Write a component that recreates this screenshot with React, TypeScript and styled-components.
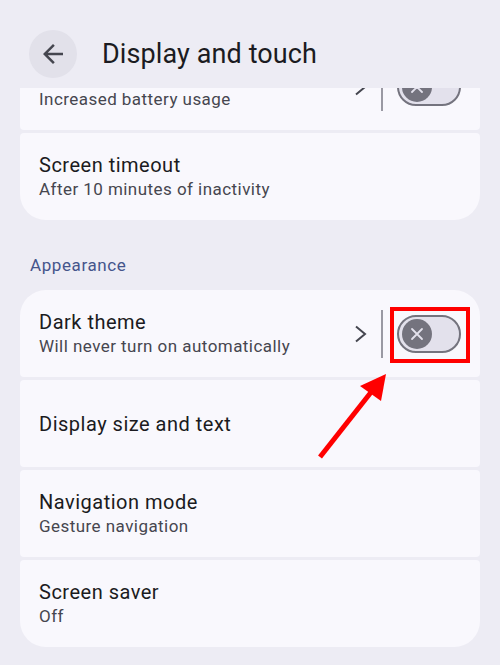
import React from "react";
import styled, { createGlobalStyle } from "styled-components";

const GlobalStyle = createGlobalStyle`
  html, body {
    margin: 0;
    padding: 0;
    background: #edecf4;
  }
  body {
    font-family: Roboto, "Noto Sans", sans-serif;
    -webkit-font-smoothing: antialiased;
  }
`;

const Page = styled.div`
  position: relative;
  width: 500px;
  height: 665px;
  overflow: hidden;
  background: #edecf4;
  display: flex;
  flex-direction: column;
`;

const Header = styled.header`
  flex: 0 0 88px;
  display: flex;
  align-items: center;
  gap: 25px;
  padding: 20px 0 0 29px;
  box-sizing: border-box;
`;

const BackButton = styled.button`
  width: 48px;
  height: 48px;
  border: none;
  border-radius: 50%;
  background: #e2e1ea;
  display: flex;
  align-items: center;
  justify-content: center;
  padding: 0;
  color: #45464f;
`;

const Title = styled.h1`
  margin: 0;
  font-size: 27px;
  font-weight: 400;
  color: #1b1b21;
  letter-spacing: 0.1px;
`;

const Scroller = styled.div`
  flex: 1;
  overflow: hidden;
`;

/* list is scrolled a little, so the first card slides under the header */
const ScrollContent = styled.div<{ $offset: number }>`
  margin-top: ${({ $offset }) => -$offset}px;
  padding: 0 20px;
`;

const Group = styled.div`
  display: flex;
  flex-direction: column;
  gap: 3px;
`;

const Card = styled.div`
  height: 87px;
  box-sizing: border-box;
  background: #f9f8fd;
  border-radius: 4px;
  padding: 0 19px 0 19px;
  display: flex;
  align-items: center;

  &:first-child {
    border-top-left-radius: 26px;
    border-top-right-radius: 26px;
  }
  &:last-child {
    border-bottom-left-radius: 26px;
    border-bottom-right-radius: 26px;
  }
`;

const Texts = styled.div`
  flex: 1;
  display: flex;
  flex-direction: column;
  min-width: 0;
`;

const RowTitle = styled.div`
  font-size: 20px;
  line-height: 24px;
  letter-spacing: 0.5px;
  color: #1b1b21;
`;

const RowSub = styled.div`
  font-size: 17px;
  line-height: 24px;
  letter-spacing: 0.45px;
  color: #46464f;
`;

const SectionLabel = styled.div`
  padding: 34px 0 13px 10px;
  font-size: 17px;
  line-height: 23px;
  letter-spacing: 0.6px;
  color: #45558b;
`;

const Trailing = styled.div`
  display: flex;
  align-items: center;
  height: 100%;
`;

const Chevron = styled.svg`
  width: 14px;
  height: 18px;
  margin-right: 13px;
  color: #45464f;
`;

const Divider = styled.div`
  width: 2px;
  height: 48px;
  background: #9a99a3;
  margin-right: 14px;
`;

const Track = styled.div`
  width: 64px;
  height: 38px;
  box-sizing: border-box;
  border: 2px solid #74737e;
  border-radius: 19px;
  background: #e3e1ec;
  display: flex;
  align-items: center;
  padding-left: 3px;
`;

const Knob = styled.div`
  width: 30px;
  height: 30px;
  border-radius: 50%;
  background: #74737e;
  display: flex;
  align-items: center;
  justify-content: center;
  color: #e3e1ec;
`;

const Callout = styled.div`
  position: absolute;
  left: 390px;
  top: 307px;
  width: 80px;
  height: 56px;
  box-sizing: border-box;
  border: 4px solid #ff0000;
  pointer-events: none;
`;

const Pointer = styled.svg`
  position: absolute;
  left: 0;
  top: 0;
  width: 500px;
  height: 665px;
  pointer-events: none;
`;

const Switch: React.FC = () => (
  <Track>
    <Knob>
      <svg width="14" height="14" viewBox="0 0 14 14">
        <path d="M2 2L12 12M12 2L2 12" stroke="currentColor" strokeWidth="1.8" strokeLinecap="round" />
      </svg>
    </Knob>
  </Track>
);

interface RowProps {
  title: string;
  subtitle?: string;
  withSwitch?: boolean;
}

const Row: React.FC<RowProps> = ({ title, subtitle, withSwitch }) => (
  <Card>
    <Texts>
      <RowTitle>{title}</RowTitle>
      {subtitle && <RowSub>{subtitle}</RowSub>}
    </Texts>
    {withSwitch && (
      <Trailing>
        <Chevron viewBox="0 0 14 18">
          <polyline points="2,1.5 11,9 2,16.5" fill="none" stroke="currentColor" strokeWidth="2" />
        </Chevron>
        <Divider />
        <Switch />
      </Trailing>
    )}
  </Card>
);

export default function App() {
  return (
    <>
      <GlobalStyle />
      <Page>
        <Header>
          <BackButton aria-label="Back">
            <svg width="30" height="30" viewBox="0 0 24 24">
              <path
                fill="currentColor"
                d="M20 11H7.83l5.59-5.59L12 4l-8 8 8 8 1.41-1.41L7.83 13H20v-2z"
              />
            </svg>
          </BackButton>
          <Title>Display and touch</Title>
        </Header>
        <Scroller>
          <ScrollContent $offset={45}>
            <Group>
              <Row title="Smooth Display" subtitle="Increased battery usage" withSwitch />
              <Row title="Screen timeout" subtitle="After 10 minutes of inactivity" />
            </Group>
            <SectionLabel>Appearance</SectionLabel>
            <Group>
              <Row title="Dark theme" subtitle="Will never turn on automatically" withSwitch />
              <Row title="Display size and text" />
              <Row title="Navigation mode" subtitle="Gesture navigation" />
              <Row title="Screen saver" subtitle="Off" />
            </Group>
          </ScrollContent>
        </Scroller>
        <Callout />
        <Pointer viewBox="0 0 500 665">
          <line x1="320" y1="457" x2="372" y2="391" stroke="#ff0000" strokeWidth="5" />
          <polygon points="386,374 360,386 381,401" fill="#ff0000" />
        </Pointer>
      </Page>
    </>
  );
}
